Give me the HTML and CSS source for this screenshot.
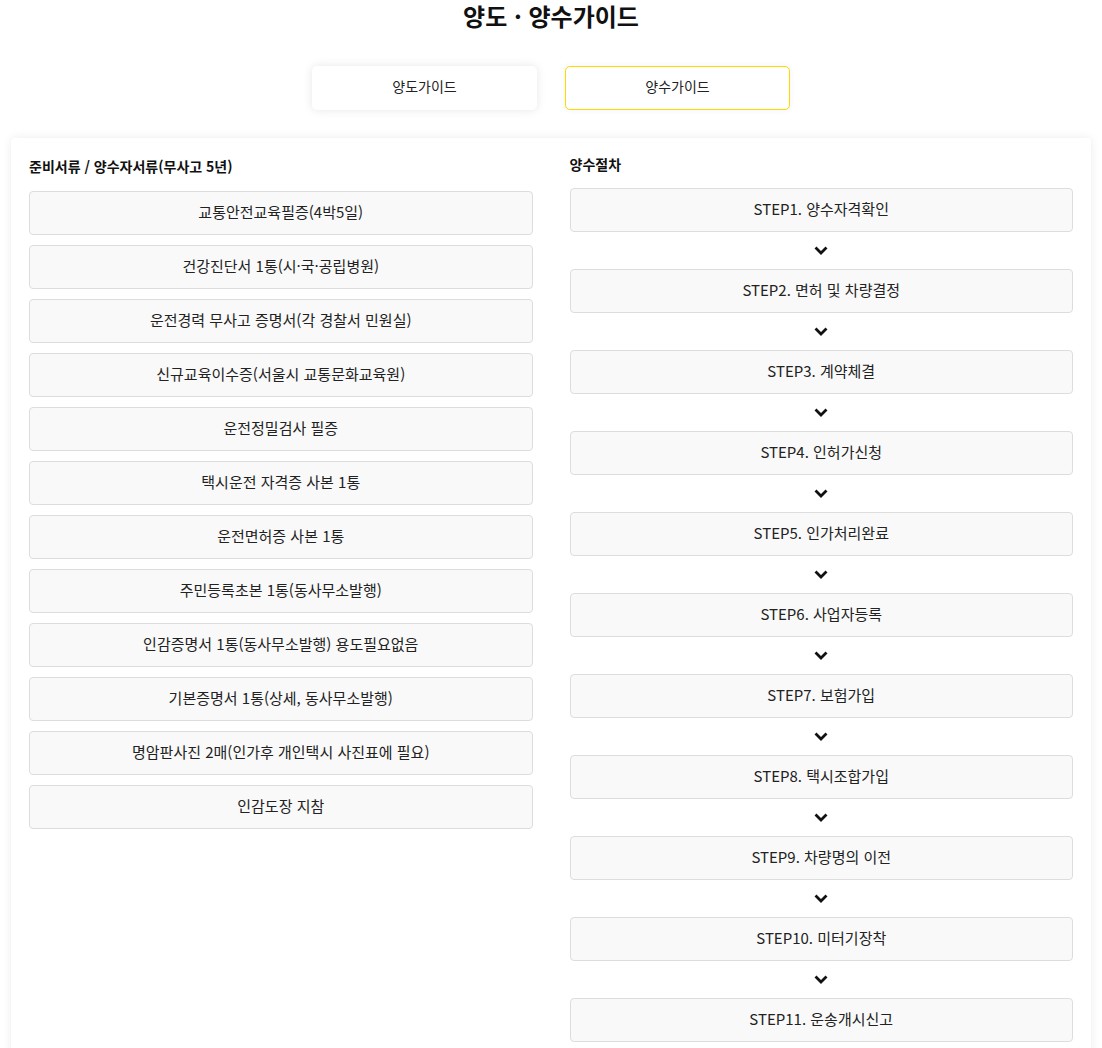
FILE: index.html
```html
<!DOCTYPE html>
<html lang="ko">
<head>
    <meta charset="UTF-8">
    <meta name="viewport" content="width=device-width, initial-scale=1.0">
    <title>양도 · 양수가이드</title>
    <link rel="stylesheet" href="styles.css">
</head>
<body>
    <h1 class="page-title">양도 · 양수가이드</h1>

    <div class="tabs">
        <button class="tab">양도가이드</button>
        <button class="tab active">양수가이드</button>
    </div>

    <div class="card">
        <div class="col">
            <h3 class="col-title docs-title">준비서류 / 양수자서류(무사고 5년)</h3>
            <div class="docs">
                <div class="item">교통안전교육필증(4박5일)</div>
                <div class="item">건강진단서 1통(시·국·공립병원)</div>
                <div class="item">운전경력 무사고 증명서(각 경찰서 민원실)</div>
                <div class="item">신규교육이수증(서울시 교통문화교육원)</div>
                <div class="item">운전정밀검사 필증</div>
                <div class="item">택시운전 자격증 사본 1통</div>
                <div class="item">운전면허증 사본 1통</div>
                <div class="item">주민등록초본 1통(동사무소발행)</div>
                <div class="item">인감증명서 1통(동사무소발행) 용도필요없음</div>
                <div class="item">기본증명서 1통(상세, 동사무소발행)</div>
                <div class="item">명암판사진 2매(인가후 개인택시 사진표에 필요)</div>
                <div class="item">인감도장 지참</div>
            </div>
        </div>

        <div class="col">
            <h3 class="col-title">양수절차</h3>
            <div class="steps" id="steps"></div>
        </div>
    </div>

    <script>
        let steps = ["양수자격확인", "면허 및 차량결정", "계약체결", "인허가신청", "인가처리완료",
                     "사업자등록", "보험가입", "택시조합가입", "차량명의 이전", "미터기장착", "운송개시신고"];
        let arrow = `<div class="arrow"><svg width="14" height="9" viewBox="0 0 14 9"><polyline points="1.5,1.5 7,7 12.5,1.5" fill="none" stroke="#111" stroke-width="2.8"/></svg></div>`;
        let stepsHTML = "";
        steps.forEach((s, i) => {
            if (i > 0) stepsHTML += arrow;
            stepsHTML += `<div class="item step">STEP${i + 1}. ${s}</div>`;
        });
        document.getElementById("steps").innerHTML = stepsHTML;
    </script>
</body>
</html>
```

FILE: styles.css
```css
body { margin: 0; font-family: "Noto Sans CJK KR", "Noto Sans", sans-serif; color: #222; background: #fff; }
.page-title { margin: 0; padding-top: 0; font-size: 24px; line-height: 32px; font-weight: 700; text-align: center; color: #111; }
.tabs { display: flex; justify-content: center; gap: 28px; margin-top: 34px; }
.tab { width: 225px; height: 44px; padding: 0 0 4px; background: #fff; border: 1px solid transparent; border-radius: 5px; font-family: inherit; font-size: 14px; color: #222; box-shadow: 0 0 10px rgba(0, 0, 0, 0.1); cursor: pointer; }
.tab.active { border-color: #ffd900; box-shadow: 0 0 6px rgba(0, 0, 0, 0.06); }
.card { max-width: 1044px; margin: 28px auto 0; padding: 16px 18px 20px; background: #fff; border-radius: 4px; box-shadow: 0 0 10px rgba(0, 0, 0, 0.08); display: grid; grid-template-columns: 1fr 1fr; column-gap: 37px; }
.col-title { margin: 0 0 14px; font-size: 14px; line-height: 20px; font-weight: 700; color: #111; }
.docs-title { margin-top: 2px; margin-bottom: 15px; }
.docs { display: flex; flex-direction: column; gap: 10px; }
.item { height: 44px; box-sizing: border-box; padding-bottom: 3px; display: flex; align-items: center; justify-content: center; background: #f9f9f9; border: 1px solid #ddd; border-radius: 4px; font-size: 15px; color: #222; }
.steps { display: flex; flex-direction: column; }
.arrow { height: 37px; display: flex; align-items: center; justify-content: center; }
.arrow svg { display: block; }
```
